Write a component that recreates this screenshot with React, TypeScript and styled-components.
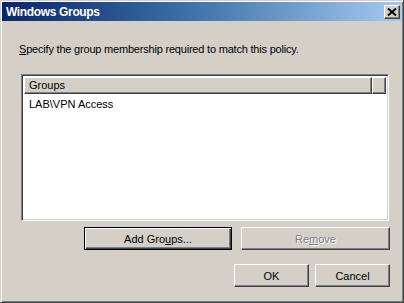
import React from "react";
import styled, { createGlobalStyle } from "styled-components";

const Global = createGlobalStyle`
  html, body { margin: 0; padding: 0; background: #D4D0C8; }
  body { font-family: Tahoma, "Liberation Sans", Arial, sans-serif; font-size: 11px; }
  * { box-sizing: border-box; }
`;

const Window = styled.div`
  width: 404px;
  height: 303px;
  background: #D4D0C8;
  border: 1px solid;
  border-color: #D4D0C8 #404040 #404040 #D4D0C8;
  box-shadow: inset 1px 1px #ffffff, inset -1px -1px #808080;
  padding: 1px;
  display: flex;
  flex-direction: column;
`;

const TitleBar = styled.div`
  height: 19px;
  display: flex;
  align-items: center;
  justify-content: space-between;
  padding: 0 2px 0 4px;
  background: linear-gradient(to right, #0A246A 0%, #3a6ea5 45%, #A6CAF0 100%);
`;

const Title = styled.span`
  color: #ffffff;
  font-weight: bold;
  font-size: 12px;
  font-family: "Liberation Sans", Arial, sans-serif;
  letter-spacing: -0.35px;
`;

const CloseBtn = styled.div`
  width: 16px;
  height: 14px;
  margin-top: 1px;
  background: #D4D0C8;
  border: 1px solid;
  border-color: #ffffff #404040 #404040 #ffffff;
  box-shadow: inset -1px -1px #808080;
  display: flex;
  align-items: center;
  justify-content: center;
`;

const Body = styled.div`
  flex: 1;
  display: flex;
  flex-direction: column;
  padding: 22px 12px 0 17px;
  font-family: "Liberation Sans", Arial, sans-serif;
  font-size: 11px;
  color: #000;
`;

const Prompt = styled.div`
  line-height: 13px;
  height: 13px;
  letter-spacing: -0.2px;
`;

const U = styled.span`
  text-decoration: underline;
  text-underline-offset: 1px;
`;

const ListBox = styled.div`
  margin: 18px 0 0 2px;
  width: 368px;
  height: 147px;
  background: #ffffff;
  border: 1px solid;
  border-color: #808080 #ffffff #ffffff #808080;
  box-shadow: inset 1px 1px #404040, inset -1px -1px #D4D0C8;
  padding: 2px;
  display: flex;
  flex-direction: column;
`;

const Header = styled.div`
  display: flex;
  height: 17px;
  flex-shrink: 0;
`;

const HeaderCell = styled.div<{ $w?: number }>`
  ${(p) => (p.$w ? `width: ${p.$w}px;` : "flex: 1;")}
  background: #D4D0C8;
  border: 1px solid;
  border-color: #ffffff #404040 #404040 #ffffff;
  box-shadow: inset -1px -1px #808080;
  padding-left: 4px;
  line-height: 14px;
  color: #000;
`;

const Row = styled.div`
  height: 16px;
  line-height: 16px;
  padding-left: 5px;
  margin-top: 2px;
`;

const ButtonRow = styled.div<{ $gap: number; $top: number }>`
  display: flex;
  justify-content: flex-end;
  gap: ${(p) => p.$gap}px;
  margin-top: ${(p) => p.$top}px;
`;

const Button = styled.div<{ $w: number; $default?: boolean; $disabled?: boolean }>`
  width: ${(p) => p.$w}px;
  height: 23px;
  background: #D4D0C8;
  display: flex;
  align-items: center;
  justify-content: center;
  font-size: 11px;
  color: ${(p) => (p.$disabled ? "#808080" : "#000")};
  text-shadow: ${(p) => (p.$disabled ? "1px 1px #ffffff" : "none")};
  border: 1px solid;
  ${(p) =>
    p.$default
      ? `border-color: #000;
         box-shadow: inset 1px 1px #ffffff, inset -1px -1px #404040, inset -2px -2px #808080;`
      : `border-color: #ffffff #404040 #404040 #ffffff;
         box-shadow: inset -1px -1px #808080;`}
`;

export default function App() {
  return (
    <>
      <Global />
      <Window>
        <TitleBar>
          <Title>Windows Groups</Title>
          <CloseBtn>
            <svg width="10" height="8" viewBox="0 0 10 8">
              <path d="M1 0.5 L9 7.5 M9 0.5 L1 7.5" stroke="#000" strokeWidth="1.9" fill="none" />
            </svg>
          </CloseBtn>
        </TitleBar>
        <Body>
          <Prompt>
            <U>S</U>pecify the group membership required to match this policy.
          </Prompt>
          <ListBox>
            <Header>
              <HeaderCell>Groups</HeaderCell>
              <HeaderCell $w={14} />
            </Header>
            <Row>LAB\VPN Access</Row>
          </ListBox>
          <ButtonRow $gap={9} $top={6}>
            <Button $w={148} $default>
              Add Gro<U>u</U>ps...
            </Button>
            <Button $w={149} $disabled>
              Re<U>m</U>ove
            </Button>
          </ButtonRow>
          <ButtonRow $gap={6} $top={14}>
            <Button $w={75}>OK</Button>
            <Button $w={75}>Cancel</Button>
          </ButtonRow>
        </Body>
      </Window>
    </>
  );
}
